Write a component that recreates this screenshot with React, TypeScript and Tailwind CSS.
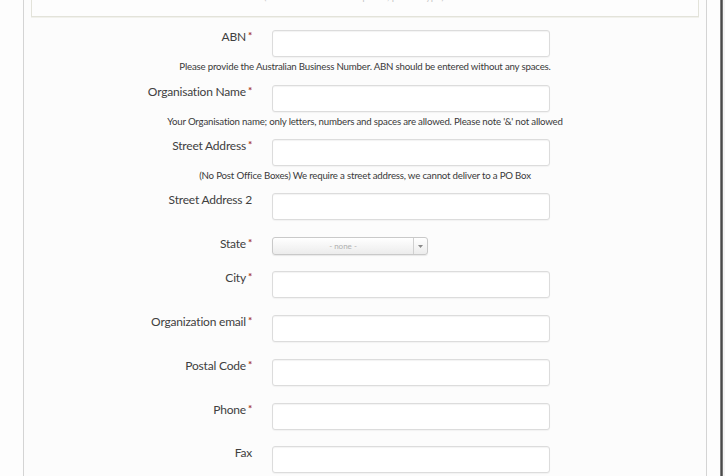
import React from 'react'

type Field = {
  label: string
  required?: boolean
  help?: string
  kind?: 'input' | 'select'
  gap: string
}

const FIELDS: Field[] = [
  {
    label: 'ABN',
    required: true,
    help: 'Please provide the Australian Business Number. ABN should be entered without any spaces.',
    gap: 'mb-[13px]',
  },
  {
    label: 'Organisation Name',
    required: true,
    help: "Your Organisation name; only letters, numbers and spaces are allowed. Please note '&' not allowed",
    gap: 'mb-[12px]',
  },
  {
    label: 'Street Address',
    required: true,
    help: '(No Post Office Boxes) We require a street address, we cannot deliver to a PO Box',
    gap: 'mb-[12px]',
  },
  { label: 'Street Address 2', gap: 'mb-[17px]' },
  { label: 'State', required: true, kind: 'select', gap: 'mb-[16px]' },
  { label: 'City', required: true, gap: 'mb-[17px]' },
  { label: 'Organization email', required: true, gap: 'mb-[17px]' },
  { label: 'Postal Code', required: true, gap: 'mb-[17px]' },
  { label: 'Phone', required: true, gap: 'mb-[16px]' },
  { label: 'Fax', gap: 'mb-[17px]' },
]

function Row({ field }: { field: Field }) {
  const isSelect = field.kind === 'select'
  return (
    <div className={field.gap}>
      <div className="flex items-start gap-[20px]">
        <label className="w-[228px] text-right text-[12px] leading-[13px] text-[#404040] tracking-[-0.2px]">
          {field.label}
          {field.required && (
            <span className="relative top-[-2px] ml-[2px] text-[10px] font-bold text-[#a8322a]">*</span>
          )}
        </label>
        {isSelect ? (
          <div className="flex h-[18px] w-[156px] rounded-[3px] border border-[#c9c9c9] bg-gradient-to-b from-white to-[#ececec] shadow-[0_1px_1px_rgba(0,0,0,0.08)]">
            <span className="flex-1 text-center text-[8px] leading-[16px] text-[#b0b0b0]">- none -</span>
            <span className="flex w-[14px] items-center justify-center border-l border-[#d0d0d0]">
              <svg width="5" height="3" viewBox="0 0 5 3">
                <path d="M0 0 L5 0 L2.5 3 Z" fill="#8a8a8a" />
              </svg>
            </span>
          </div>
        ) : (
          <div className="h-[27px] w-[278px] rounded-[3px] border border-[#dcdcdc] bg-white shadow-[inset_0_1px_1px_rgba(0,0,0,0.05),0_1px_1px_rgba(0,0,0,0.04)]" />
        )}
      </div>
      {field.help && (
        <p className="mt-[3px] h-[12px] whitespace-nowrap text-center text-[9.7px] leading-[12px] text-[#3a3a3a] tracking-[-0.2px]">
          {field.help}
        </p>
      )}
    </div>
  )
}

export default function App() {
  return (
    <div
      className="flex h-[476px] w-[725px] overflow-hidden bg-[#fdfdfd]"
      style={{ fontFamily: 'Lato, "Open Sans", sans-serif' }}
    >
      <div className="w-[23px] shrink-0" />
      <div className="w-[684px] shrink-0 border-x border-[#d4d4d4] bg-[#fcfcfc]">
        <div className="mx-[7px] h-[17px] overflow-hidden border-x border-b border-[#e3e3da] bg-[#fdfdfd] shadow-[0_1px_0_#f1f1ec]">
          <p className="mt-[-10px] pr-[22px] text-center text-[10px] leading-[13px] text-[#c8c8c8]">
            (fields marked * are required, please type)
          </p>
        </div>
        <div className="mt-[13px]">
          {FIELDS.map((f) => (
            <Row key={f.label} field={f} />
          ))}
        </div>
      </div>
      <div className="w-[13px] shrink-0" />
      <div className="w-[3px] shrink-0 bg-gradient-to-r from-[#9a9a9a] via-[#4a4a4a] to-[#8a8a8a]" />
      <div className="flex-1 bg-[#f4f4f4]" />
    </div>
  )
}
